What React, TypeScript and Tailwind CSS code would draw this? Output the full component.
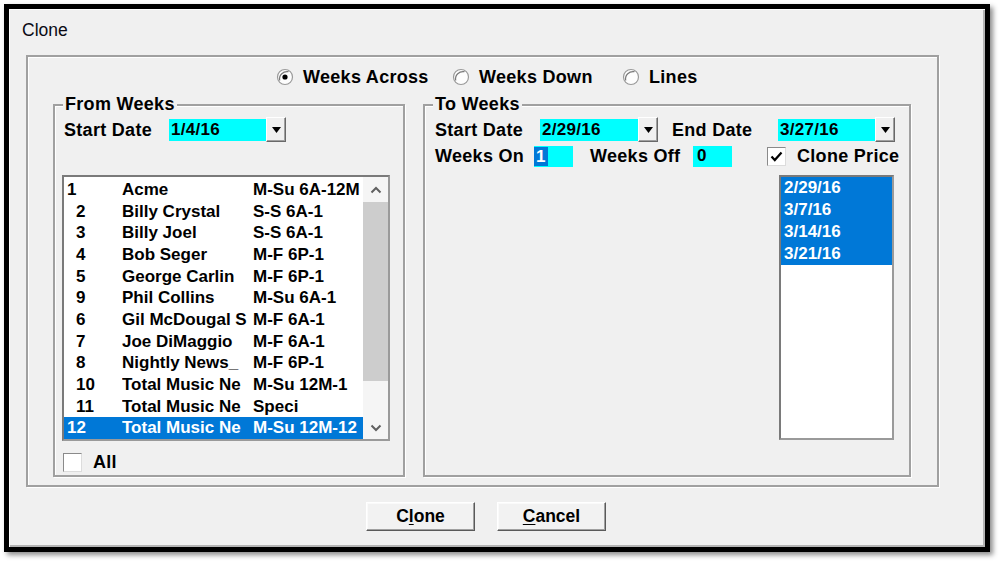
import React from 'react';

// ---------------------- Data ----------------------
const programs: [string, string, string][] = [
  ['1', 'Acme', 'M-Su 6A-12M'],
  ['2', 'Billy Crystal', 'S-S 6A-1'],
  ['3', 'Billy Joel', 'S-S 6A-1'],
  ['4', 'Bob Seger', 'M-F 6P-1'],
  ['5', 'George Carlin', 'M-F 6P-1'],
  ['9', 'Phil Collins', 'M-Su 6A-1'],
  ['6', 'Gil McDougal S', 'M-F 6A-1'],
  ['7', 'Joe DiMaggio', 'M-F 6A-1'],
  ['8', 'Nightly News_', 'M-F 6P-1'],
  ['10', 'Total Music Ne', 'M-Su 12M-1'],
  ['11', 'Total Music Ne', 'Speci'],
  ['12', 'Total Music Ne', 'M-Su 12M-12'],
];

const weeks = ['2/29/16', '3/7/16', '3/14/16', '3/21/16'];

// ---------------------- Small controls ----------------------
function Radio({ checked, label, width }: { checked?: boolean; label: string; width?: string }) {
  return (
    <div className={`flex items-center ${width ?? ''}`}>
      <svg width="18" height="18" viewBox="0 0 18 18">
        <circle cx="9" cy="9" r="7.5" fill="#fdfdfd" stroke="#9a9a9a" strokeWidth="1.2" />
        <path d="M3.7 12.5 A7.5 7.5 0 0 1 12.5 3.7" fill="none" stroke="#7a7a7a" strokeWidth="1.2" />
        {checked ? <circle cx="9" cy="9" r="2.6" fill="#000" /> : null}
      </svg>
      <span className="ml-[9px]">{label}</span>
    </div>
  );
}

function DropButton() {
  return (
    <div className="w-[20px] h-[25px] bg-[#f0f0f0] border border-t-white border-l-white border-r-[#696969] border-b-[#696969] shadow-[inset_-1px_-1px_0_#a0a0a0] grid place-content-center">
      <svg width="9" height="6" viewBox="0 0 9 6">
        <polygon points="0,0 9,0 4.5,6" fill="#000" />
      </svg>
    </div>
  );
}

function DateCombo({ value, width }: { value: string; width: string }) {
  return (
    <div className="flex items-center">
      <div className={`${width} h-[22px] bg-[#00ffff] pl-[2px] flex items-center text-[17px]`}>{value}</div>
      <DropButton />
    </div>
  );
}

function CheckBox({ checked }: { checked?: boolean }) {
  return (
    <div className="w-[19px] h-[19px] bg-white border border-t-[#8a8a8a] border-l-[#8a8a8a] border-r-[#dcdcdc] border-b-[#dcdcdc] grid place-content-center">
      {checked ? (
        <svg width="13" height="11" viewBox="0 0 13 11">
          <polyline points="1.5,5.5 4.8,9 11.5,1.5" fill="none" stroke="#000" strokeWidth="2.2" />
        </svg>
      ) : null}
    </div>
  );
}

function Chevron({ up }: { up?: boolean }) {
  return (
    <svg width="12" height="8" viewBox="0 0 12 8">
      <polyline
        points={up ? '1.5,6.5 6,2 10.5,6.5' : '1.5,1.5 6,6 10.5,1.5'}
        fill="none"
        stroke="#606060"
        strokeWidth="2"
      />
    </svg>
  );
}

function GroupBox({ title, className, children }: { title: string; className: string; children?: React.ReactNode }) {
  return (
    <div
      className={`relative border-2 border-[#a0a0a0] shadow-[inset_1px_1px_0_#fff,1px_1px_0_#fff] ${className}`}
    >
      <span className="absolute -top-[12px] left-[8px] px-[2px] bg-[#f0f0f0] leading-[20px]">{title}</span>
      {children}
    </div>
  );
}

function DialogButton({ children }: { children: React.ReactNode }) {
  return (
    <button className="w-[109px] h-[29px] bg-[#f2f2f2] border border-t-white border-l-white border-r-[#5a5a5a] border-b-[#5a5a5a] shadow-[inset_-1px_-1px_0_#a0a0a0,inset_1px_1px_0_#fafafa] text-[17.5px] font-bold leading-none">
      {children}
    </button>
  );
}

// ---------------------- Rendering ----------------------
export default function App() {
  return (
    <div
      className="w-[1004px] h-[566px] bg-white pt-[4px] pl-[4px] text-black"
      style={{ fontFamily: '"Liberation Sans", Arial, sans-serif' }}
    >
      <div className="w-[986px] h-[548px] border-[5px] border-black bg-[#f0f0f0] shadow-[3px_3px_5px_rgba(0,0,0,0.45),inset_1px_1px_0_#fff,inset_-2px_-2px_0_#b4b4b4] flex flex-col">
        <div className="pl-[13px] pt-[11px] leading-[20px] text-[17.5px] text-[#0a0a14]">Clone</div>

        <div className="ml-[17px] mt-[15px] w-[913px] h-[432px] border-2 border-[#a0a0a0] shadow-[inset_1px_1px_0_#fff,1px_1px_0_#fff] flex flex-col font-bold text-[18px] tracking-[0.3px]">
          {/* Layout radios */}
          <div className="mt-[10px] h-[20px] pl-[248px] flex items-center leading-[20px]">
            <Radio checked label="Weeks Across" width="w-[176px]" />
            <Radio label="Weeks Down" width="w-[170px]" />
            <Radio label="Lines" />
          </div>

          <div className="mt-[17px] ml-[25px] flex gap-[18px]">
            {/* From Weeks */}
            <GroupBox title="From Weeks" className="w-[352px] h-[373px] flex flex-col">
              <div className="mt-[11px] pl-[9px] flex items-center leading-[20px]">
                <span className="w-[105px]">Start Date</span>
                <DateCombo value="1/4/16" width="w-[97px]" />
              </div>

              <div className="mt-[33px] ml-[7px] w-[328px] h-[266px] border-2 border-t-[#7a7a7a] border-l-[#7a7a7a] border-r-[#9a9a9a] border-b-[#9a9a9a] bg-white flex text-[17px] tracking-normal">
                <div className="flex-1 flex flex-col pt-[2px]">
                  {programs.map((p, i) => {
                    const selected = i === programs.length - 1;
                    const flush = i === 0 || selected;
                    return (
                      <div
                        key={i}
                        className={`h-[21.67px] flex items-center whitespace-nowrap overflow-hidden ${
                          selected ? 'bg-[#0078d7] text-white' : ''
                        }`}
                      >
                        <span className={`w-[58px] ${flush ? 'pl-[3px]' : 'pl-[12px]'}`}>{p[0]}</span>
                        <span className="w-[131px] overflow-hidden">{p[1]}</span>
                        <span>{p[2]}</span>
                      </div>
                    );
                  })}
                </div>
                <div className="w-[25px] flex flex-col bg-[#f5f5f5]">
                  <div className="h-[25px] grid place-content-center">
                    <Chevron up />
                  </div>
                  <div className="h-[179px] bg-[#cdcdcd]" />
                  <div className="flex-1" />
                  <div className="h-[23px] grid place-content-center">
                    <Chevron />
                  </div>
                </div>
              </div>

              <div className="mt-[11px] ml-[8px] flex items-center leading-[20px]">
                <CheckBox />
                <span className="ml-[11px]">All</span>
              </div>
            </GroupBox>

            {/* To Weeks */}
            <GroupBox title="To Weeks" className="w-[488px] h-[373px] flex flex-col">
              <div className="mt-[11px] pl-[10px] flex items-center leading-[20px]">
                <span className="w-[105px]">Start Date</span>
                <DateCombo value="2/29/16" width="w-[98px]" />
                <span className="ml-[14px] w-[106px]">End Date</span>
                <DateCombo value="3/27/16" width="w-[97px]" />
              </div>

              <div className="mt-[3px] pl-[10px] h-[22px] flex items-center leading-[20px]">
                <span className="w-[99px]">Weeks On</span>
                <div className="w-[39px] h-[21px] bg-[#00ffff] flex items-center text-[17px]">
                  <span className="h-[19px] px-[2px] bg-[#0078d7] text-white leading-[19px]">1</span>
                </div>
                <span className="ml-[17px] w-[103px]">Weeks Off</span>
                <div className="w-[39px] h-[21px] bg-[#00ffff] pl-[4px] flex items-center text-[17px]">0</div>
                <div className="ml-[35px]">
                  <CheckBox checked />
                </div>
                <span className="ml-[11px]">Clone Price</span>
              </div>

              <div className="mt-[8px] ml-[354px] w-[115px] h-[265px] border-2 border-t-[#7a7a7a] border-l-[#7a7a7a] border-r-[#9a9a9a] border-b-[#9a9a9a] bg-white flex flex-col text-[17px] tracking-normal">
                {weeks.map((w) => (
                  <div key={w} className="h-[22px] pl-[3px] flex items-center bg-[#0078d7] text-white">
                    {w}
                  </div>
                ))}
              </div>
            </GroupBox>
          </div>
        </div>

        <div className="mt-[15px] pl-[357px] flex gap-[22px]">
          <DialogButton>
            C<u className="underline-offset-2">l</u>one
          </DialogButton>
          <DialogButton>
            <u className="underline-offset-2">C</u>ancel
          </DialogButton>
        </div>
      </div>
    </div>
  );
}
